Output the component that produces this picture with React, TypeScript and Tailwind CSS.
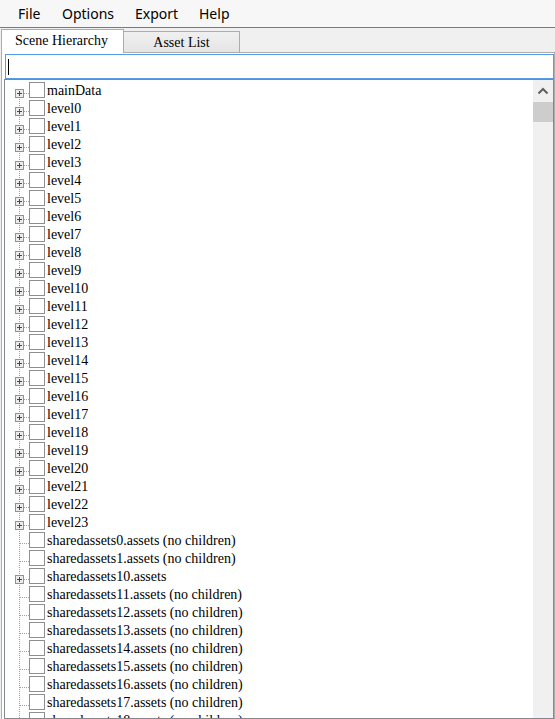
import React from "react";

type Row = { label: string; exp: boolean; first?: boolean };

const rows: Row[] = [
  { label: "mainData", exp: true, first: true },
  ...Array.from({ length: 24 }, (_, i) => ({ label: `level${i}`, exp: true })),
  { label: "sharedassets0.assets (no children)", exp: false },
  { label: "sharedassets1.assets (no children)", exp: false },
  { label: "sharedassets10.assets", exp: true },
  ...Array.from({ length: 8 }, (_, i) => ({
    label: `sharedassets${i + 11}.assets (no children)`,
    exp: false,
  })),
];

function Lines({ exp, first }: { exp: boolean; first?: boolean }) {
  return (
    <svg width="24" height="18" className="block shrink-0" shapeRendering="crispEdges">
      <line x1="14.5" y1={first ? 12 : 0} x2="14.5" y2="18" stroke="#a0a0a0" strokeDasharray="1 1" />
      {exp ? (
        <>
          <line x1="19" y1="12.5" x2="24" y2="12.5" stroke="#a0a0a0" strokeDasharray="1 1" />
          <rect x="10.5" y="8.5" width="8" height="8" fill="#ececec" stroke="#929292" />
          <line x1="12" y1="12.5" x2="17" y2="12.5" stroke="#2e4a8e" />
          <line x1="14.5" y1="10" x2="14.5" y2="15" stroke="#2e4a8e" />
        </>
      ) : (
        <line x1="15" y1="12.5" x2="24" y2="12.5" stroke="#a0a0a0" strokeDasharray="1 1" />
      )}
    </svg>
  );
}

export default function App() {
  const serif = { fontFamily: '"Liberation Serif", "Times New Roman", serif' };
  return (
    <div className="w-[555px] h-[719px] overflow-hidden bg-[#f0f0f0] flex flex-col select-none">
      {/* Menu bar */}
      <div
        className="h-[28px] shrink-0 bg-[#f7f7f7] border-b border-[#7a7a7a] flex items-center text-[14px] text-black"
        style={{ fontFamily: '"Noto Sans", "Segoe UI", sans-serif' }}
      >
        <span className="ml-[18px] w-[44px]">File</span>
        <span className="w-[73px]">Options</span>
        <span className="w-[64px]">Export</span>
        <span>Help</span>
      </div>

      {/* Tab strip */}
      <div className="h-[24px] shrink-0 flex items-end pl-[1px] text-[14px] text-black" style={serif}>
        <div className="relative z-10 -mb-[1px] h-[24px] w-[123px] bg-white border-l border-t border-r border-[#acacac] flex items-start pl-[13px] pt-[2px] leading-[18px]">
          Scene Hierarchy
        </div>
        <div className="h-[21px] w-[117px] -ml-[1px] bg-gradient-to-b from-[#f0f0f0] to-[#e5e5e5] border-l border-t border-r border-[#acacac] flex items-start justify-center pt-[2px] leading-[18px]">
          Asset List
        </div>
      </div>

      {/* Tab page */}
      <div className="flex-1 min-h-0 ml-[1px] w-[554px] bg-white border-l border-t border-r border-[#acacac] flex flex-col pl-[2px] pt-[1px]">
        <div className="h-[25px] shrink-0 ml-[1px] w-[549px] border border-[#569de5] bg-white flex items-center pl-[2px]">
          <div className="w-[1px] h-[16px] bg-black" />
        </div>
        <div className="flex-1 min-h-0 w-[550px] border border-[#828790] bg-white flex">
          <div className="flex-1 min-w-0 overflow-hidden pt-[1px] text-[14px] text-black" style={serif}>
            {rows.map((r) => (
              <div key={r.label} className="h-[18px] flex items-start">
                <Lines exp={r.exp} first={r.first} />
                <div className="mt-[1px] w-[16px] h-[16px] shrink-0 border border-[#8e8f8f] bg-white" />
                <span className="ml-[2px] leading-[18px] pt-[1px] whitespace-nowrap">{r.label}</span>
              </div>
            ))}
          </div>
          <div className="w-[20px] shrink-0 bg-[#f0f0f0] flex flex-col">
            <div className="h-[22px] flex items-center justify-center">
              <svg width="12" height="8" viewBox="0 0 12 8">
                <path d="M1.5 6.5 L6 2 L10.5 6.5" fill="none" stroke="#606060" strokeWidth="2" />
              </svg>
            </div>
            <div className="h-[20px] bg-[#cdcdcd]" />
          </div>
        </div>
      </div>
    </div>
  );
}
